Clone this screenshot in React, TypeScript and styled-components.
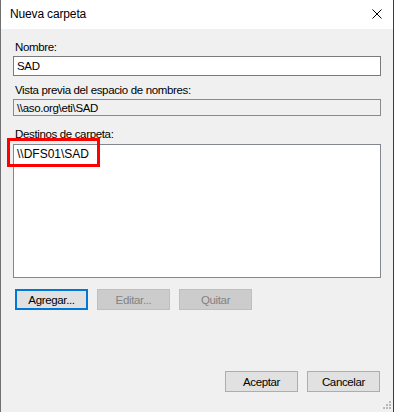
import React from 'react';
import styled, { createGlobalStyle } from 'styled-components';

const GlobalStyle = createGlobalStyle`
  html, body {
    margin: 0;
    padding: 0;
    background: #4a3346;
  }
  * {
    box-sizing: border-box;
  }
`;

const Window = styled.div`
  position: relative;
  width: 393px;
  height: 412px;
  display: flex;
  flex-direction: column;
  border-left: 1px solid #707070;
  background: #f0f0f0;
  font-family: "Liberation Sans", Arial, sans-serif;
  color: #000;
`;

const TitleBar = styled.div`
  height: 29px;
  flex: none;
  display: flex;
  align-items: center;
  justify-content: space-between;
  padding: 0 11px 2px 9px;
  background: #ffffff;
`;

const Title = styled.span`
  font-size: 12px;
  letter-spacing: -0.15px;
`;

const CloseIcon = styled.svg`
  width: 10px;
  height: 10px;
  margin-top: 1px;
`;

const Body = styled.div`
  flex: 1;
  display: flex;
  flex-direction: column;
  padding: 11px 12px 20px 12px;
  font-size: 11.5px;
  letter-spacing: -0.35px;
`;

const Label = styled.div<{ $gap?: number; $below?: number }>`
  height: 14px;
  line-height: 14px;
  padding-left: 2px;
  margin-top: ${p => p.$gap ?? 0}px;
  margin-bottom: ${p => p.$below ?? 2}px;
`;

const TextBox = styled.div<{ $readOnly?: boolean }>`
  height: ${p => (p.$readOnly ? 17 : 20)}px;
  display: flex;
  align-items: center;
  padding: 0 3px;
  border: 1px solid ${p => (p.$readOnly ? '#8a8a8a' : '#7a7a7a')};
  background: ${p => (p.$readOnly ? '#f0f0f0' : '#ffffff')};
`;

const ListBox = styled.div`
  height: 134px;
  padding: 2px 3px;
  border: 1px solid #828790;
  background: #ffffff;
  line-height: 14px;
  font-size: 12px;
  letter-spacing: 0;
`;

const ButtonRow = styled.div<{ $end?: boolean }>`
  display: flex;
  gap: 9px;
  justify-content: ${p => (p.$end ? 'flex-end' : 'flex-start')};
  padding: ${p => (p.$end ? '0 1px 0 0' : '0 0 0 2px')};
  margin-top: ${p => (p.$end ? 'auto' : '11px')};
`;

const Button = styled.div<{ $default?: boolean; $disabled?: boolean }>`
  width: 73px;
  height: 21px;
  display: flex;
  align-items: center;
  justify-content: center;
  background: ${p => (p.$disabled ? '#cccccc' : '#e1e1e1')};
  border: ${p => (p.$default ? '2px solid #0078d7' : `1px solid ${p.$disabled ? '#bfbfbf' : '#adadad'}`)};
  color: ${p => (p.$disabled ? '#838383' : '#000')};
`;

const Highlight = styled.div`
  position: absolute;
  left: 6px;
  top: 138px;
  width: 93px;
  height: 29px;
  border: 3px solid #ff0000;
`;

const SizeGrip = styled.svg`
  position: absolute;
  right: 1px;
  bottom: 2px;
  width: 9px;
  height: 9px;
`;

export default function App() {
  const dots = [
    [6, 0],
    [3, 3],
    [6, 3],
    [0, 6],
    [3, 6],
    [6, 6],
  ];

  return (
    <>
      <GlobalStyle />
      <Window>
        <TitleBar>
          <Title>Nueva carpeta</Title>
          <CloseIcon viewBox="0 0 10 10">
            <path d="M0.5 0.5 L9.5 9.5 M9.5 0.5 L0.5 9.5" stroke="#000" strokeWidth="1" fill="none" />
          </CloseIcon>
        </TitleBar>
        <Body>
          <Label>Nombre:</Label>
          <TextBox>SAD</TextBox>
          <Label $gap={7}>Vista previa del espacio de nombres:</Label>
          <TextBox $readOnly>\\aso.org\eti\SAD</TextBox>
          <Label $gap={11} $below={3}>Destinos de carpeta:</Label>
          <ListBox>\\DFS01\SAD</ListBox>
          <ButtonRow>
            <Button $default>Agregar...</Button>
            <Button $disabled>Editar...</Button>
            <Button $disabled>Quitar</Button>
          </ButtonRow>
          <ButtonRow $end>
            <Button>Aceptar</Button>
            <Button>Cancelar</Button>
          </ButtonRow>
        </Body>
        <Highlight />
        <SizeGrip viewBox="0 0 9 9">
          {dots.map(([x, y]) => (
            <rect key={`${x}-${y}`} x={x} y={y} width="2" height="2" fill="#b8b8b8" />
          ))}
        </SizeGrip>
      </Window>
    </>
  );
}
